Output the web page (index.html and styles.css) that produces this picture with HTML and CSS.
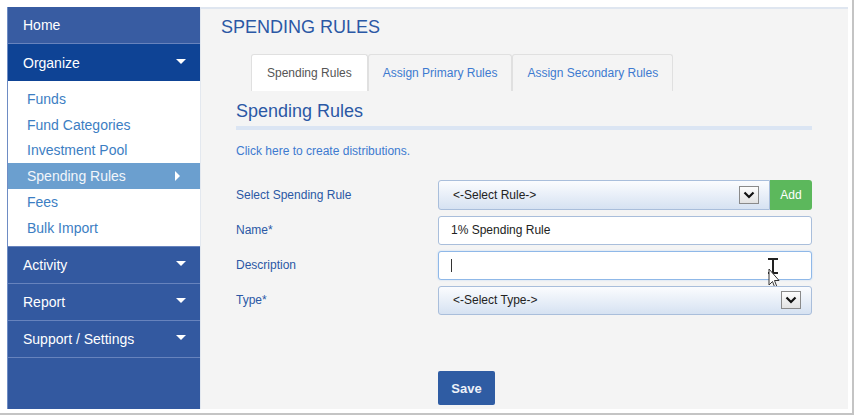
FILE: index.html
```html
<!DOCTYPE html>
<html>
<head>
<meta charset="utf-8">
<link rel="stylesheet" href="styles.css">
</head>
<body>
<div class="window">
  <div class="app">
    <nav class="sidebar">
      <div class="nav-head home">Home</div>
      <div class="nav-head open">Organize<span class="caret-down"></span></div>
      <ul class="submenu">
        <li>Funds</li>
        <li>Fund Categories</li>
        <li>Investment Pool</li>
        <li class="active">Spending Rules<span class="caret-right"></span></li>
        <li>Fees</li>
        <li>Bulk Import</li>
      </ul>
      <div class="nav-head">Activity<span class="caret-down"></span></div>
      <div class="nav-head">Report<span class="caret-down"></span></div>
      <div class="nav-head">Support / Settings<span class="caret-down"></span></div>
      <div class="nav-fill"></div>
    </nav>
    <main class="main">
      <h1 class="page-title">SPENDING RULES</h1>
      <div class="tabs">
        <div class="tab active">Spending Rules</div>
        <div class="tab">Assign Primary Rules</div>
        <div class="tab">Assign Secondary Rules</div>
      </div>
      <section class="panel">
        <h2 class="panel-title">Spending Rules</h2>
        <div class="panel-bar"></div>
        <a class="link">Click here to create distributions.</a>
        <div class="form">
          <label class="lbl">Select Spending Rule</label>
          <div class="field-group">
            <div class="select grow">&lt;-Select Rule-&gt;<span class="arrow-box"><svg width="12" height="8" viewBox="0 0 12 8"><path d="M1.5 1.5 L6 6 L10.5 1.5" fill="none" stroke="#111" stroke-width="2.2"/></svg></span></div>
            <div class="btn-add">Add</div>
          </div>
          <label class="lbl">Name*</label>
          <div class="input">1% Spending Rule</div>
          <label class="lbl">Description</label>
          <div class="input focus"><span class="caret-text"></span>
            <svg class="mouse" width="16" height="34" viewBox="0 0 16 34">
              <path d="M2 2 H12 M7 2 V16 M2 16 H12" stroke="#222" stroke-width="2" fill="none"/>
              <path d="M3 12 L3 28 L6.5 24.5 L9 31 L11 30 L8.5 23.5 L13 23.5 Z" fill="#fff" stroke="#333" stroke-width="1"/>
            </svg>
          </div>
          <label class="lbl">Type*</label>
          <div class="select type">&lt;-Select Type-&gt;<span class="arrow-box"><svg width="12" height="8" viewBox="0 0 12 8"><path d="M1.5 1.5 L6 6 L10.5 1.5" fill="none" stroke="#111" stroke-width="2.2"/></svg></span></div>
        </div>
        <div class="actions">
          <div class="btn-save">Save</div>
        </div>
      </section>
    </main>
  </div>
</div>
</body>
</html>
```

FILE: styles.css
```css
* { box-sizing: border-box; }
html, body { margin: 0; padding: 0; background: #fff; }
body { font-family: "Liberation Sans", Arial, sans-serif; }

.window {
  width: 854px;
  height: 415px;
  padding: 7px 4px 4px 7px;
  border-right: 2px solid #c4c4c4;
  border-bottom: 2px solid #c4c4c4;
  background: #fff;
}
.app {
  display: flex;
  height: 402px;
}

/* Sidebar */
.sidebar {
  width: 193px;
  display: flex;
  flex-direction: column;
  background: #3359a0;
  border-left: 1px solid #6e8cc4;
}
.nav-head {
  height: 37px;
  display: flex;
  align-items: center;
  justify-content: space-between;
  padding: 0 14px 0 15px;
  color: #fff;
  font-size: 14px;
  background: #3359a0;
  border-bottom: 1px solid #6783bd;
}
.nav-head.home { background: #385ca2; }
.nav-head.open { background: #0e4395; border-bottom: none; }
.caret-down {
  width: 0; height: 0;
  border-left: 5px solid transparent;
  border-right: 5px solid transparent;
  border-top: 5px solid #fff;
  margin-top: -2px;
}
.caret-right {
  width: 0; height: 0;
  border-top: 5px solid transparent;
  border-bottom: 5px solid transparent;
  border-left: 5px solid #fff;
  margin-right: 6px;
}
.submenu {
  list-style: none;
  margin: 0;
  padding: 5px 0 5px 0;
  background: #fff;
  border-bottom: 1px solid #6783bd;
}
.submenu li {
  height: 25.8px;
  display: flex;
  align-items: center;
  justify-content: space-between;
  padding: 0 14px 0 19px;
  color: #3c7ec3;
  font-size: 14px;
}
.submenu li.active {
  background: #6b9fcf;
  color: #f2f6fb;
}
.nav-fill { flex: 1; background: #3359a0; }

/* Main */
.main {
  width: 648px;
  background: #f4f4f4;
  border-top: 2px solid #dfe6f0;
  border-left: 1px solid #e3e8ef;
  padding: 7px 0 0 20px;
}
.page-title {
  margin: 0;
  font-size: 18px;
  line-height: 22px;
  font-weight: normal;
  color: #2b58a5;
}
.tabs {
  display: flex;
  margin: 16px 0 0 30px;
}
.tab {
  height: 37px;
  padding: 0 14px;
  display: flex;
  align-items: center;
  font-size: 12px;
  color: #3d7ad0;
  background: #f4f4f4;
  border: 1px solid #e0e0e0;
  border-bottom: none;
  border-radius: 3px 3px 0 0;
}
.tab.active {
  background: #fff;
  color: #555;
  padding: 0 15px;
}
.panel {
  margin-left: 15px;
  width: 576px;
}
.panel-title {
  margin: 9px 0 0 0;
  font-size: 18px;
  line-height: 22px;
  font-weight: normal;
  color: #2b58a5;
}
.panel-bar {
  height: 4px;
  background: #dbe5f3;
  margin-top: 4px;
}
.link {
  display: block;
  margin-top: 14px;
  font-size: 12px;
  line-height: 15px;
  color: #3d7ad0;
}
.form {
  margin-top: 21px;
  display: grid;
  grid-template-columns: 202px 374px;
  grid-auto-rows: 30px;
  row-gap: 5px;
  align-items: center;
}
.lbl {
  font-size: 12px;
  color: #2b58a5;
  align-self: start;
  padding-top: 8px;
}
.field-group { display: flex; height: 30px; }
.select {
  position: relative;
  height: 30px;
  display: flex;
  align-items: center;
  padding-left: 14px;
  font-size: 12px;
  color: #222;
  background: linear-gradient(#fbfcfe, #d6e2f2);
  border: 1px solid #a9bedb;
  border-radius: 3px;
}
.select.grow { flex: 1; border-radius: 3px 0 0 3px; }
.select.type { height: 29px; }
.arrow-box {
  position: absolute;
  right: 10px;
  top: 5px;
  width: 20px;
  height: 18px;
  display: flex;
  align-items: center;
  justify-content: center;
  background: linear-gradient(#fdfdfd, #e2e2e2);
  border: 1px solid #8a8a8a;
}
.select.type .arrow-box { right: 10px; top: 4px; }
.btn-add {
  width: 42px;
  height: 30px;
  display: flex;
  align-items: center;
  justify-content: center;
  background: #5cb85c;
  color: #fff;
  font-size: 12px;
  border-radius: 0 3px 3px 0;
}
.input {
  position: relative;
  height: 29px;
  display: flex;
  align-items: center;
  padding-left: 12px;
  font-size: 12px;
  color: #222;
  background: #fff;
  border: 1px solid #a9bedb;
  border-radius: 3px;
}
.input.focus {
  border-color: #8fb8e8;
  box-shadow: 0 0 2px #b9d4f3;
}
.caret-text {
  width: 1px;
  height: 13px;
  background: #333;
}
.mouse {
  position: absolute;
  left: 327px;
  top: 5px;
}
.actions {
  margin-top: 56px;
  padding-left: 202px;
}
.btn-save {
  width: 57px;
  height: 34px;
  display: flex;
  align-items: center;
  justify-content: center;
  background: #2f5ca3;
  color: #eef2f8;
  font-size: 13px;
  font-weight: bold;
  border-radius: 2px;
}
```
